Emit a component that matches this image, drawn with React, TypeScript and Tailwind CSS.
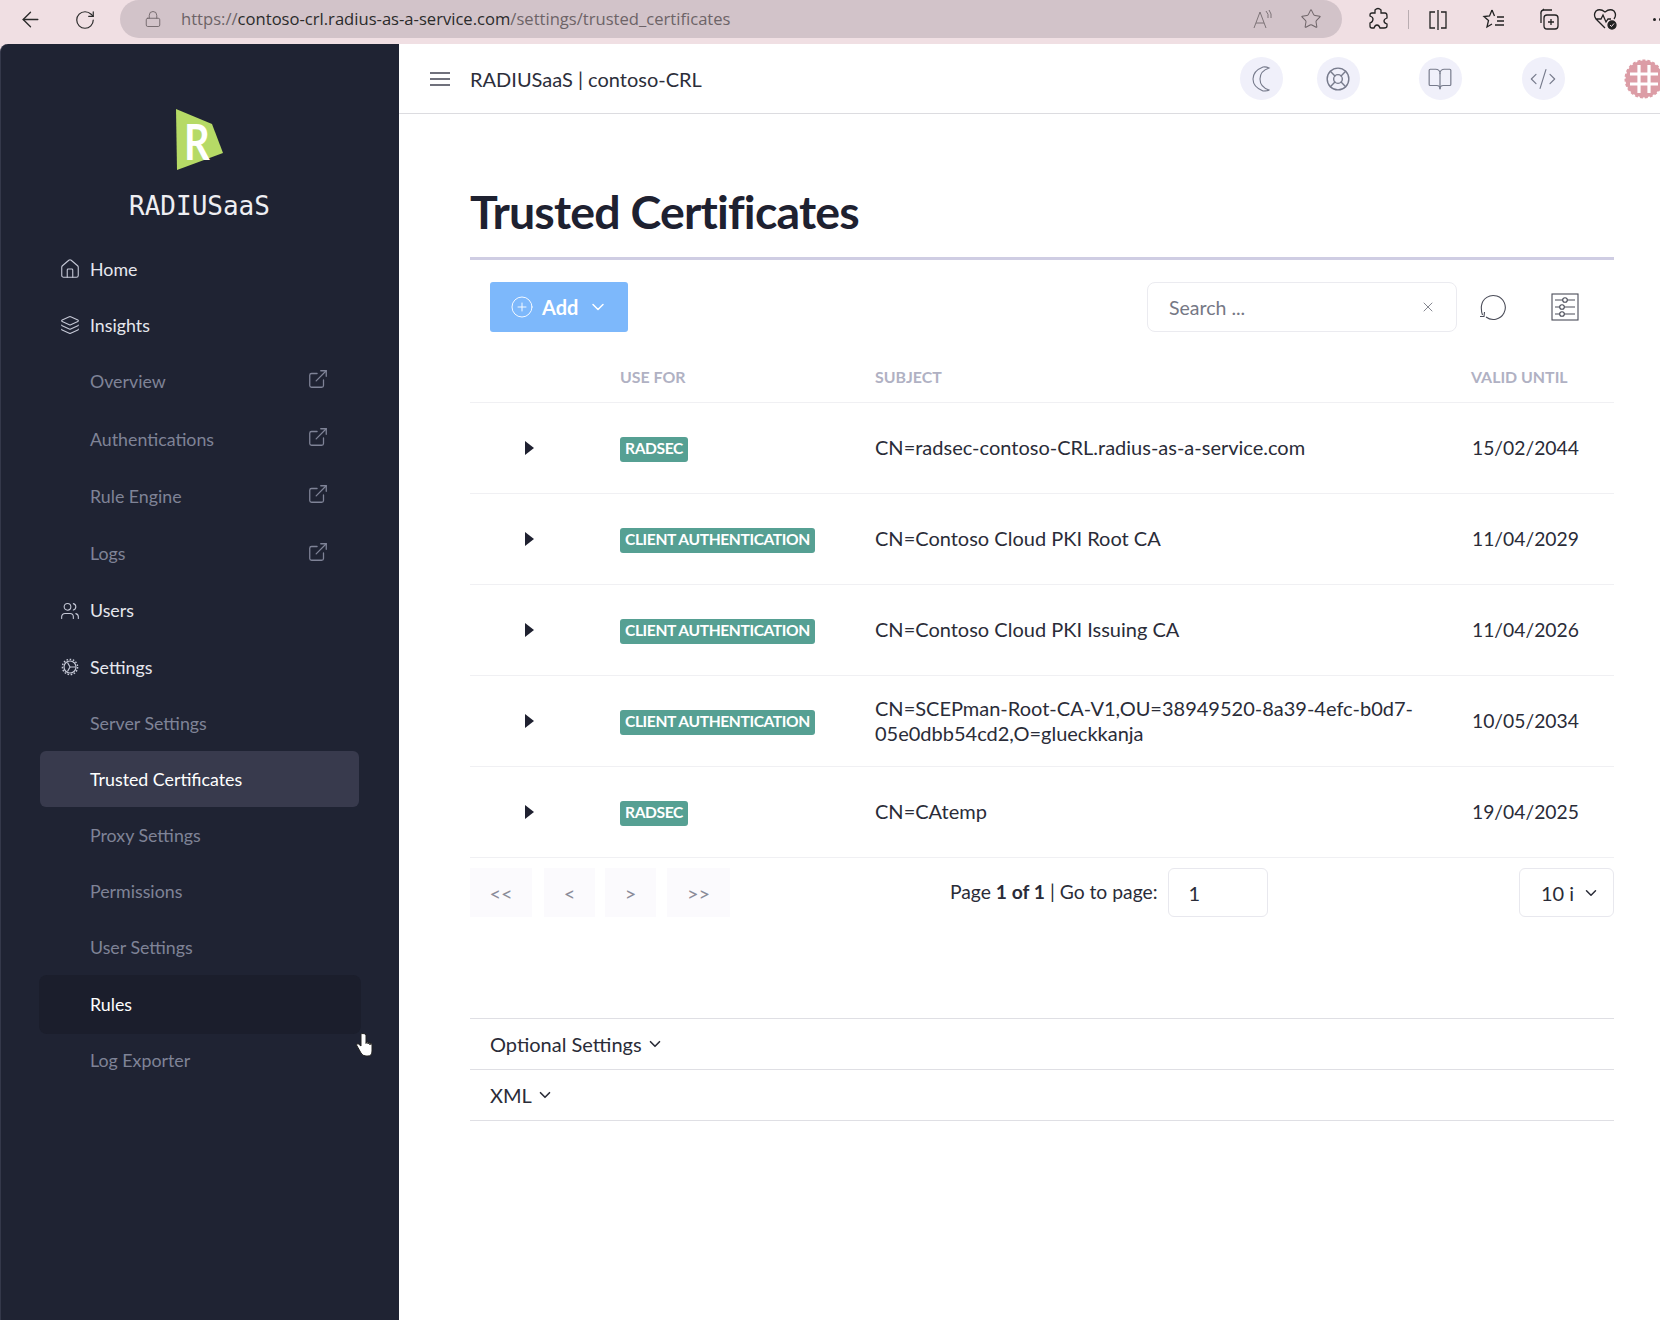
import { ArrowLeft, BookOpen, ChevronDown, CodeXml, ExternalLink, Home, Layers, LifeBuoy, Lock, PlusCircle, RotateCw, Star, Users, X } from 'lucide-react';

const lato = 'font-["Lato","Liberation_Sans",sans-serif]';

const certs = [
  { use: 'RADSEC', subject: ['CN=radsec-contoso-CRL.radius-as-a-service.com'], until: '15/02/2044' },
  { use: 'CLIENT AUTHENTICATION', subject: ['CN=Contoso Cloud PKI Root CA'], until: '11/04/2029' },
  { use: 'CLIENT AUTHENTICATION', subject: ['CN=Contoso Cloud PKI Issuing CA'], until: '11/04/2026' },
  { use: 'CLIENT AUTHENTICATION', subject: ['CN=SCEPman-Root-CA-V1,OU=38949520-8a39-4efc-b0d7-', '05e0dbb54cd2,O=glueckkanja'], until: '10/05/2034' },
  { use: 'RADSEC', subject: ['CN=CAtemp'], until: '19/04/2025' },
];

function GearIcon() {
  return (
    <svg width="18" height="18" viewBox="0 0 18 18" fill="none" stroke="#c5c8d6" strokeWidth="1.2" className="ml-px">
      <circle cx="9" cy="9" r="6" />
      <path d="M9 9 L6.5 4.5 M9 9 L14.5 9 M9 9 L6.5 13.5" />
      <circle cx="9" cy="9" r="7.6" strokeDasharray="1.6 1.6" strokeWidth="1.4" />
    </svg>
  );
}

function MainItem({ icon, label, short }: { icon: React.ReactNode; label: string; short?: boolean }) {
  return (
    <div className={`flex items-center pl-[59px] text-[#e6e7ee] ${short ? 'h-[55.4px]' : 'h-[56.4px]'}`}>
      <span className="flex w-[30px] items-center">{icon}</span>
      <span className="text-[17.8px]">{label}</span>
    </div>
  );
}

function SubItem({ label, external, last }: { label: string; external?: boolean; last?: boolean }) {
  return (
    <div className={`flex items-center justify-between pl-[89px] pr-[70px] text-[#7f8397] ${external ? 'h-[57.4px]' : last ? 'h-[52px]' : 'h-[56px]'}`}>
      <span className="text-[17.8px]">{label}</span>
      {external && <ExternalLink size={22} strokeWidth={1.4} className="mb-1 text-[#7f8397]" />}
    </div>
  );
}

function Sidebar() {
  return (
    <aside className="flex w-[399px] shrink-0 flex-col rounded-tl-[8px] border-l border-[#34384a] bg-[#1f2333]">
      <div className="flex h-[197px] flex-col items-center pr-[1px]">
        <svg width="48" height="62" viewBox="0 0 48 62" className="mt-[65px]">
          <polygon points="0,0 36,15 47,44 1,61" fill="#b6da66" />
          <text x="0" y="0" transform="translate(8 51) scale(0.8 1)" fontFamily="Lato" fontWeight="700" fontSize="50" fill="#ffffff">R</text>
        </svg>
        <div className='mt-[18px] font-["DejaVu_Sans_Mono",monospace] text-[26px] leading-[34px] text-[#eeeef2]'>RADIUSaaS</div>
      </div>
      <nav className="flex flex-col">
        <MainItem icon={<Home size={22} strokeWidth={1.2} className="-ml-px text-[#c5c8d6]" />} label="Home" />
        <MainItem short icon={<Layers size={20} strokeWidth={1.3} className="text-[#c5c8d6]" />} label="Insights" />
        <SubItem label="Overview" external />
        <SubItem label="Authentications" external />
        <SubItem label="Rule Engine" external />
        <SubItem label="Logs" external />
        <MainItem icon={<Users size={20} strokeWidth={1.3} className="text-[#c5c8d6]" />} label="Users" />
        <MainItem icon={<GearIcon />} label="Settings" />
        <SubItem label="Server Settings" />
        <div className="mx-[39px] mr-[40px] flex h-[56px] items-center rounded-[6px] bg-[#383a4d] pl-[50px] text-[17.8px] text-white">Trusted Certificates</div>
        <SubItem label="Proxy Settings" />
        <SubItem label="Permissions" />
        <SubItem label="User Settings" />
        <div className="relative mx-[38px] flex h-[59px] items-center rounded-[8px] bg-[#1b1e2c] pl-[51px] text-[17.8px] text-white">
          Rules
          <svg width="18" height="24" viewBox="0 0 18 24" className="absolute top-[58px] left-[316px]">
            <path d="M6 1.5 V13 L3.5 11 Q1.5 10 1.5 12 L6 20 Q7.5 23 11 23 H13 Q17 23 17 18 V12 Q17 10 15 10 V12 V9.5 Q13 9 13 11 V9 Q11 8.5 11 10.5 V2 Q10 0.5 8 0.5 Q6 0.5 6 1.5 Z" fill="#ffffff" stroke="#222222" strokeWidth="1" />
          </svg>
        </div>
        <SubItem label="Log Exporter" last />
      </nav>
    </aside>
  );
}

function RoundIcon({ children }: { children: React.ReactNode }) {
  return <div className="flex h-[43px] w-[43px] shrink-0 items-center justify-center rounded-full bg-[#f0f0fa] text-[#777b8c]">{children}</div>;
}

function Header() {
  return (
    <header className="flex h-[70px] shrink-0 items-center border-b border-[#dcdce0] pl-[31px]">
      <div className="flex w-[20px] shrink-0 flex-col gap-[4px]">
        <span className="h-[2px] bg-[#70717c]" />
        <span className="h-[2px] bg-[#70717c]" />
        <span className="h-[2px] bg-[#70717c]" />
      </div>
      <div className="ml-[20px] shrink-0 text-[20px] text-[#2c2e3a]">RADIUSaaS | contoso-CRL</div>
      <div className="ml-[538px] flex items-center">
        <RoundIcon>
          <svg width="24" height="28" viewBox="0 0 24 28" fill="none" stroke="#777b8c" strokeWidth="1.1">
            <path d="M14 2 Q4 6 4 14 Q4 22 14 26 Q19 26 20 25 Q11 22 11 14 Q11 6 20 3 Q17 1.5 14 2 Z" />
          </svg>
        </RoundIcon>
        <div className="ml-[34px]"><RoundIcon><LifeBuoy size={26} strokeWidth={1.3} /></RoundIcon></div>
        <div className="ml-[59px]"><RoundIcon><BookOpen size={26} strokeWidth={1.1} /></RoundIcon></div>
        <div className="ml-[60px]"><RoundIcon><CodeXml size={28} strokeWidth={1} /></RoundIcon></div>
        <svg width="40" height="40" viewBox="0 0 40 40" className="ml-[59px] shrink-0">
          <circle cx="20" cy="20" r="18.5" fill="#dc9da6" stroke="#dc9da6" strokeWidth="2" strokeDasharray="3 2" />
          <path d="M6 15 H34 M6 25 H34 M15 6 V34 M25 6 V34" stroke="#ffffff" strokeWidth="3.2" />
        </svg>
      </div>
    </header>
  );
}

function Toolbar() {
  return (
    <div className="mt-[22px] flex items-center pl-[20px] pr-[35px]">
      <button className="flex h-[50px] w-[138px] items-center rounded-[3px] bg-[#7db8fb] pl-[20px] text-white">
        <PlusCircle size={24} strokeWidth={0.9} />
        <span className="ml-[8px] text-[20px] font-bold">Add</span>
        <ChevronDown size={20} strokeWidth={1.8} className="ml-[10px]" />
      </button>
      <div className="ml-auto flex h-[50px] w-[310px] items-center justify-between rounded-[8px] border border-[#ebebf0] pl-[21px] pr-[20px]">
        <span className="pt-[1px] text-[19.5px] text-[#757885]">Search ...</span>
        <X size={16} strokeWidth={1.2} className="text-[#666874]" />
      </div>
      <svg width="28" height="28" viewBox="0 0 28 28" fill="none" stroke="#4a4c58" strokeWidth="1.1" className="ml-[22px]">
        <path d="M7 24 A12 12 0 1 0 2.4 13 Q2 18 3.5 22 M1 23.5 L5 23.5 L5.5 19" />
      </svg>
      <svg width="28" height="28" viewBox="0 0 28 28" fill="none" stroke="#4a4c58" strokeWidth="1.1" className="ml-[44px]">
        <rect x="1" y="1" width="26" height="26" />
        <path d="M4 7 H24 M4 14 H24 M4 21 H24" />
        <circle cx="14" cy="7" r="2.3" fill="#ffffff" />
        <circle cx="11" cy="14" r="2.3" fill="#ffffff" />
        <circle cx="11" cy="21" r="2.3" fill="#ffffff" />
      </svg>
    </div>
  );
}

function CertTable() {
  return (
    <div className="mt-[20px]">
      <div className="flex h-[51px] items-center border-b border-[#f0f0f3] text-[15.9px] font-bold text-[#b0b1c3]">
        <span className="ml-[150px] w-[255px]">USE FOR</span>
        <span className="w-[596px]">SUBJECT</span>
        <span>VALID UNTIL</span>
      </div>
      {certs.map((cert) => (
        <div key={cert.subject[0]} className="flex h-[91px] items-center border-b border-[#f0f0f3] pb-[1px] text-[20px] text-[#2a2c38]">
          <div className="flex w-[150px] items-center pl-[55px]">
            <svg width="9" height="14" viewBox="0 0 9 14"><path d="M0 0 L9 7 L0 14 Z" fill="#1f2130" /></svg>
          </div>
          <div className="w-[255px] pb-[2px]">
            <span className="inline-flex h-[25px] items-center rounded-[3px] bg-[#56a093] px-[5px] text-[15.6px] font-bold tracking-[-0.4px] text-white">{cert.use}</span>
          </div>
          <div className="w-[596px] text-[20px] leading-[25px]">
            {cert.subject.map((line) => <div key={line}>{line}</div>)}
          </div>
          <div className="ml-[1px] pt-[2px] text-[19.3px]">{cert.until}</div>
        </div>
      ))}
    </div>
  );
}

function PageButton({ width, label }: { width: string; label: string }) {
  return <div className={`flex h-[49px] items-center justify-center bg-[#fbfafd] text-[20px] text-[#8a8c99] ${width}`}>{label}</div>;
}

function Pagination() {
  return (
    <div className="mt-[10px] flex items-center">
      <PageButton width="w-[62px]" label="<<" />
      <div className="ml-[12px]"><PageButton width="w-[51px]" label="<" /></div>
      <div className="ml-[10px]"><PageButton width="w-[51px]" label=">" /></div>
      <div className="ml-[11px]"><PageButton width="w-[63px]" label=">>" /></div>
      <div className="ml-[220px] text-[19.3px] text-[#2a2c38]">Page <b>1 of 1</b> | Go to page:</div>
      <div className="ml-[10px] flex h-[49px] w-[100px] items-center rounded-[6px] border border-[#e8e8ee] pl-[20px] text-[20px] text-[#2a2c38]">1</div>
      <div className="ml-auto flex h-[49px] w-[95px] items-center rounded-[6px] border border-[#e8e8ee] pl-[21px] text-[20px] text-[#2a2c38]">
        10 i
        <ChevronDown size={18} strokeWidth={2} className="ml-[8px]" />
      </div>
    </div>
  );
}

function Collapsible({ label }: { label: string }) {
  return (
    <div className="flex h-[51px] items-center border-b border-[#dfdfe4] pl-[20px] text-[20px] text-[#2a2c38]">
      {label}
      <ChevronDown size={18} strokeWidth={2.2} className="ml-[4px]" />
    </div>
  );
}

function BrowserBar() {
  return (
    <div className="flex h-[44px] shrink-0 items-start overflow-hidden bg-[#f0dfe3] text-[#2b2b2b]">
      <ArrowLeft size={25} strokeWidth={1.3} className="mt-[7px] ml-[18px] shrink-0" />
      <RotateCw size={22} strokeWidth={1.3} className="mt-[9px] ml-[31px] shrink-0" />
      <div className='ml-[24px] flex h-[38px] w-[1222px] shrink-0 items-center rounded-[19px] bg-[#d2c3c9] pl-[24px] pr-[20px] font-["Open_Sans",sans-serif] text-[16.6px]'>
        <Lock size={18} strokeWidth={1.2} className="text-[#6e6468]" />
        <span className="ml-[19px] text-[#6d6367]">https://</span>
        <span className="text-[#2b2b2b]">contoso-crl.radius-as-a-service.com</span>
        <span className="text-[#6d6367]">/settings/trusted_certificates</span>
        <svg width="22" height="22" viewBox="0 0 22 22" fill="none" stroke="#7d7377" strokeWidth="1" className="ml-auto">
          <path d="M2 20 L8 4 L14 20 M4 15 H12 M14 3 Q17 6 16 10 M17 2 Q20 6 19 10" />
        </svg>
        <Star size={22} strokeWidth={1.1} className="ml-[26px] text-[#6e6468]" />
      </div>
      <svg width="22" height="24" viewBox="0 0 22 24" fill="none" stroke="#222" strokeWidth="1.3" className="mt-[7px] ml-[25px] shrink-0">
        <path d="M8 3 Q11 0 14 3 V6 H18 Q20 6 20 9 V11 Q17 12 17 14 Q17 16 20 17 V19 Q20 21 17 21 H13 Q12 18 10 18 Q8 18 7 21 H5 Q3 21 3 19 V16 Q6 15 6 12 Q6 10 3 9 V8 Q3 6 5 6 H8 Z" />
      </svg>
      <span className="mt-[10px] ml-[19px] h-[19px] w-px shrink-0 bg-[#b9adb1]" />
      <svg width="22" height="22" viewBox="0 0 22 22" fill="none" stroke="#222" strokeWidth="1.3" className="mt-[9px] ml-[18px] shrink-0">
        <path d="M8 3 H3 V19 H8 M14 3 H19 V19 H14 M11 1 V21" />
      </svg>
      <svg width="24" height="24" viewBox="0 0 24 24" fill="none" stroke="#222" strokeWidth="1.3" className="mt-[7px] ml-[33px] shrink-0">
        <path d="M10 3 L7.5 9 L2 9.5 L6.5 13.5 L5 20 L10 17 M10 3 L12.5 9 M15 10 H22 M15 14 H22 M13 18 H22" />
      </svg>
      <svg width="24" height="24" viewBox="0 0 24 24" fill="none" stroke="#222" strokeWidth="1.3" className="mt-[7px] ml-[31px] shrink-0">
        <rect x="7" y="8" width="14" height="14" rx="3" />
        <path d="M14 12 V18 M11 15 H17 M4 16 V6 Q4 3 7 3 H15 M4 7 Q3 5 7 2" />
      </svg>
      <svg width="26" height="24" viewBox="0 0 26 24" fill="none" stroke="#222" strokeWidth="1.3" className="mt-[7px] ml-[32px] shrink-0">
        <path d="M12 21 L3 12 Q0 8 3 4 Q7 1 12 5 Q17 1 21 4 Q24 8 21 12 M3 12 H8 L10 8 L13 15 L15 12 H18" />
        <circle cx="19" cy="18" r="4" fill="#222" />
        <path d="M17 18 L18.5 19.5 L21 16.5" stroke="#f0dfe3" strokeWidth="1" />
      </svg>
      <span className="mt-[18px] ml-[34px] flex shrink-0 gap-[3px]">
        <span className="h-[3px] w-[3px] rounded-full bg-[#222]" />
        <span className="h-[3px] w-[3px] rounded-full bg-[#222]" />
        <span className="h-[3px] w-[3px] rounded-full bg-[#222]" />
      </span>
    </div>
  );
}

export default function App() {
  return (
    <div className={`flex h-[1320px] w-[1660px] flex-col overflow-hidden bg-[#f0dfe3] ${lato}`}>
      <BrowserBar />
      <div className="flex min-h-0 flex-1">
        <Sidebar />
        <main className="flex min-w-0 flex-1 flex-col overflow-hidden bg-white">
          <Header />
          <div className="pl-[71px] pr-[46px]">
            <h1 className="mt-[63px] text-[46.5px] leading-[68px] font-bold tracking-[-0.8px] text-[#1e2130]">Trusted Certificates</h1>
            <div className="mt-[12px] h-[3px] bg-[#cfcde3]" />
            <Toolbar />
            <CertTable />
            <Pagination />
            <div className="mt-[101px] border-t border-[#dfdfe4]">
              <Collapsible label="Optional Settings" />
              <Collapsible label="XML" />
            </div>
          </div>
        </main>
      </div>
    </div>
  );
}
